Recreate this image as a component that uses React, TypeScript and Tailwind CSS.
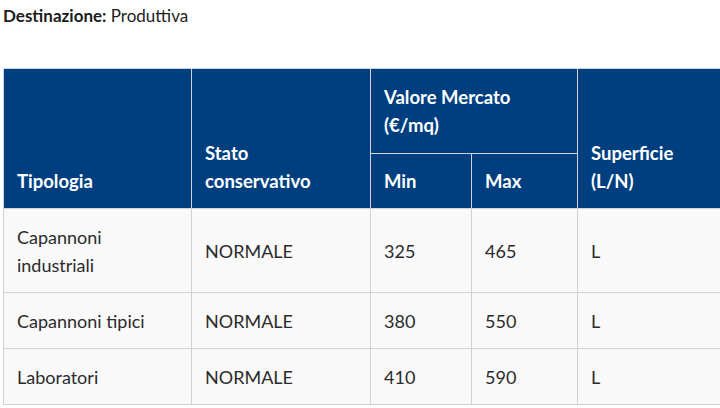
import React from "react";

const rows = [
  ["Capannoni industriali", "NORMALE", "325", "465", "L"],
  ["Capannoni tipici", "NORMALE", "380", "550", "L"],
  ["Laboratori", "NORMALE", "410", "590", "L"],
];

export default function App() {
  return (
    <div className="w-[720px] h-[408px] overflow-hidden bg-white text-[#1a1a1a]" style={{ fontFamily: "Lato, 'Noto Sans', sans-serif" }}>
      <p className="pl-[3px] pt-[5px] text-[17px] leading-[22px] text-[#1c1c1c]">
        <span className="font-bold">Destinazione:</span> Produttiva
      </p>
      <table className="mt-[41px] ml-[3px] border-collapse w-[800px] table-fixed text-[18px] leading-[28px]">
        <colgroup>
          <col className="w-[188px]" />
          <col className="w-[179px]" />
          <col className="w-[101px]" />
          <col className="w-[106px]" />
          <col className="w-[226px]" />
        </colgroup>
        <thead className="bg-[#003f7f] text-white font-bold text-[18.5px]">
          <tr>
            <th rowSpan={2} className="border border-[#cfd4da] px-[13px] pb-[13px] align-bottom text-left">Tipologia</th>
            <th rowSpan={2} className="border border-[#cfd4da] px-[13px] pb-[13px] align-bottom text-left">Stato<br />conservativo</th>
            <th colSpan={2} className="border border-[#cfd4da] px-[13px] pt-[14px] pb-[14px] h-[84px] align-top text-left">Valore Mercato<br />(€/mq)</th>
            <th rowSpan={2} className="border border-[#cfd4da] px-[13px] pb-[13px] align-bottom text-left">Superficie<br />(L/N)</th>
          </tr>
          <tr>
            <th className="border border-[#cfd4da] px-[13px] py-[13px] align-bottom text-left">Min</th>
            <th className="border border-[#cfd4da] px-[13px] py-[13px] align-bottom text-left">Max</th>
          </tr>
        </thead>
        <tbody className="bg-[#f9f9f9] text-[#2b2b2b]">
          {rows.map((r, i) => (
            <tr key={i}>
              {r.map((c, j) => (
                <td key={j} className="border border-[#d2d2d2] px-[13px] py-[13.5px] align-middle">
                  {c}
                </td>
              ))}
            </tr>
          ))}
        </tbody>
      </table>
    </div>
  );
}
